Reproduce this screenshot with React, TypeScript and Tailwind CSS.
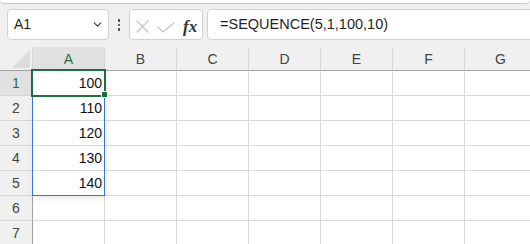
import React from 'react';
import { ChevronDown } from 'lucide-react';

const COLUMNS = ['A', 'B', 'C', 'D', 'E', 'F', 'G'];
const ROWS = [1, 2, 3, 4, 5, 6, 7];

// spilled values from =SEQUENCE(5,1,100,10)
const VALUES: Record<number, number> = { 1: 100, 2: 110, 3: 120, 4: 130, 5: 140 };

function FormulaBar() {
  return (
    <div className="relative h-[47px] bg-[#f0f0f0]">
      <div className="mx-[1px] h-[3px] rounded-b-[5px] bg-white shadow-[0_1px_1px_rgba(0,0,0,0.18)]" />

      <div className="mt-[6px] flex h-[31px] items-stretch">
        {/* Name box */}
        <div className="ml-[7px] flex w-[102px] items-center justify-between rounded-[4px] border border-[#d1d1d1] bg-white pl-[6px] pr-[4px]">
          <span className="text-[14px] text-[#1f1f1f]">A1</span>
          <ChevronDown className="h-[13px] w-[13px] text-[#3a3a3a]" strokeWidth={2} />
        </div>

        {/* Vertical ellipsis */}
        <div className="flex w-[20px] flex-col items-center justify-center gap-[2px] pt-[1px]">
          <span className="h-[2.5px] w-[2.5px] rounded-full bg-[#3a3a3a]" />
          <span className="h-[2.5px] w-[2.5px] rounded-full bg-[#3a3a3a]" />
          <span className="h-[2.5px] w-[2.5px] rounded-full bg-[#3a3a3a]" />
        </div>

        {/* Cancel / enter / fx */}
        <div className="flex w-[74px] items-center rounded-[4px] border border-[#d1d1d1] bg-white pl-[6px] pt-[3px]">
          <svg width="13" height="13" viewBox="0 0 13 13" className="shrink-0">
            <path d="M0.5 0.5 12.5 12.5 M12.5 0.5 0.5 12.5" stroke="#c2c2c2" strokeWidth="1.1" fill="none" />
          </svg>
          <svg width="18" height="11" viewBox="0 0 18 11" className="ml-[8px] mt-[3px] shrink-0">
            <path d="M0.5 4.5 6 10 17.5 0.5" stroke="#c2c2c2" strokeWidth="1.1" fill="none" />
          </svg>
          <span className="ml-[8px] font-['Liberation_Serif',serif] text-[17px] font-semibold italic leading-none text-[#333]">
            fx
          </span>
        </div>

        {/* Formula input */}
        <div className="ml-[4px] mr-[-6px] flex flex-1 items-center rounded-[4px] border border-[#d1d1d1] bg-white pl-[12px]">
          <span className="text-[14.5px] text-[#1f1f1f]">=SEQUENCE(5,1,100,10)</span>
        </div>
      </div>
    </div>
  );
}

function Sheet() {
  return (
    <div className="relative flex-1 overflow-hidden bg-white">
      <div className="grid grid-cols-[33px_repeat(7,72px)]">
        {/* Corner */}
        <div className="flex h-[24px] items-end justify-end border-r border-b border-r-[#d6d6d6] border-b-[#a3a3a3] bg-[#f0f0f0] pb-[2px] pr-[2px]">
          <svg width="18" height="18" viewBox="0 0 18 18">
            <polygon points="18,0 18,18 0,18" fill="#dcdcdc" />
          </svg>
        </div>

        {COLUMNS.map((col) => (
          <div
            key={col}
            className={`flex h-[24px] items-center justify-center border-r border-b border-r-[#d6d6d6] border-b-[#a3a3a3] pt-[1px] text-[14px] ${
              col === 'A' ? 'bg-[#e1e1e1] text-[#1e7145]' : 'bg-[#f0f0f0] text-[#444]'
            }`}
          >
            {col}
          </div>
        ))}

        {ROWS.map((row) => (
          <React.Fragment key={row}>
            <div
              className={`flex h-[25px] items-center justify-center border-r border-b border-r-[#a3a3a3] border-b-[#d6d6d6] text-[14px] ${
                row === 1 ? 'bg-[#e1e1e1] text-[#1e7145]' : 'bg-[#f0f0f0] text-[#444]'
              }`}
            >
              {row}
            </div>
            {COLUMNS.map((col) => (
              <div
                key={col}
                className="flex h-[25px] items-center justify-end border-r border-b border-[#dadada] pr-[2px] text-[14px] text-[#111]"
              >
                {col === 'A' ? VALUES[row] : null}
              </div>
            ))}
          </React.Fragment>
        ))}
      </div>

      {/* Spill range outline */}
      <div className="pointer-events-none absolute left-[32px] top-[23px] h-[126px] w-[73px] border border-[#3b73d4] shadow-[2px_3px_6px_rgba(0,0,0,0.08)]" />

      {/* Active cell */}
      <div className="pointer-events-none absolute left-[31px] top-[22px] h-[28px] w-[75px] border-2 border-[#1e6e43]" />
      <div className="pointer-events-none absolute left-[101px] top-[44px] h-[7px] w-[7px] border border-white bg-[#1e6e43]" />
    </div>
  );
}

export default function App() {
  return (
    <div className="flex h-[244px] w-[530px] flex-col overflow-hidden bg-[#f0f0f0] font-['Liberation_Sans',Arial,sans-serif]">
      <FormulaBar />
      <Sheet />
    </div>
  );
}
